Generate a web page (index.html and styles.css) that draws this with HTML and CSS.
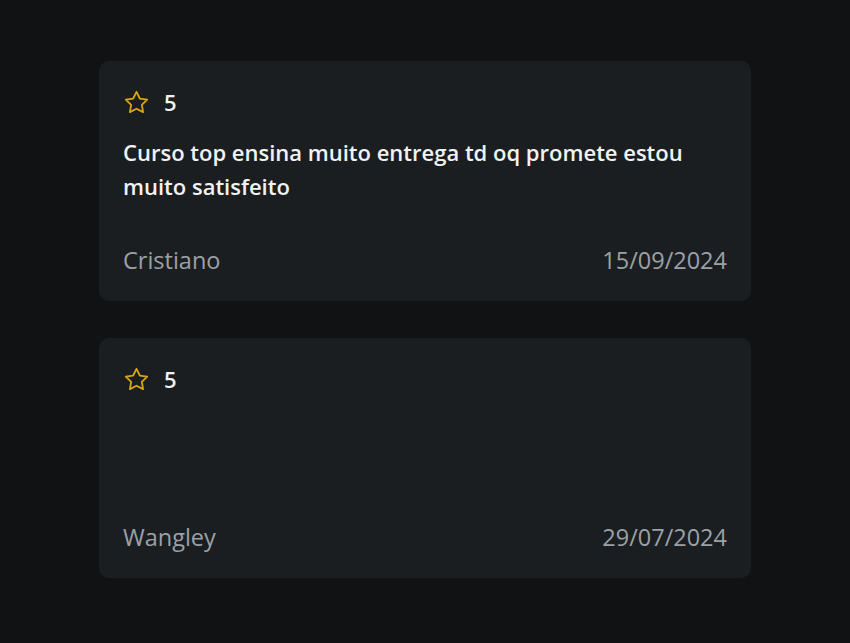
FILE: index.html
```html
<!DOCTYPE html>
<html lang="pt-BR">
<head>
    <meta charset="UTF-8">
    <meta name="viewport" content="width=device-width, initial-scale=1.0">
    <title>Avaliações</title>
    <link rel="stylesheet" href="styles.css">
</head>
<body>
    <div class="reviews">
        <div class="review-card">
            <div class="rating">
                <svg class="star" viewBox="0 0 24 24" fill="none" stroke="currentColor" stroke-width="1.6" stroke-linejoin="round"><path d="M12 2.5l2.94 5.96 6.56.95-4.75 4.63 1.12 6.54L12 17.5l-5.87 3.08 1.12-6.54L2.5 9.41l6.56-.95z"/></svg>
                <span>5</span>
            </div>
            <p class="comment">Curso top ensina muito entrega td oq promete estou muito satisfeito</p>
            <div class="review-footer">
                <span>Cristiano</span>
                <span>15/09/2024</span>
            </div>
        </div>
        <div class="review-card">
            <div class="rating">
                <svg class="star" viewBox="0 0 24 24" fill="none" stroke="currentColor" stroke-width="1.6" stroke-linejoin="round"><path d="M12 2.5l2.94 5.96 6.56.95-4.75 4.63 1.12 6.54L12 17.5l-5.87 3.08 1.12-6.54L2.5 9.41l6.56-.95z"/></svg>
                <span>5</span>
            </div>
            <p class="comment"></p>
            <div class="review-footer">
                <span>Wangley</span>
                <span>29/07/2024</span>
            </div>
        </div>
    </div>
</body>
</html>
```

FILE: styles.css
```css
body {
    margin: 0;
    background-color: #111214;
    font-family: "Open Sans", sans-serif;
    color: #f1f2f3;
}
.reviews {
    width: 652px;
    margin: 0 auto;
    padding-top: 61px;
    display: flex;
    flex-direction: column;
    gap: 37px;
}
.review-card {
    background-color: #1b1e21;
    border-radius: 10px;
    padding: 24px;
    min-height: 240px;
    box-sizing: border-box;
    display: flex;
    flex-direction: column;
}
.rating {
    display: flex;
    align-items: center;
    gap: 14px;
    height: 34px;
    font-size: 22px;
    font-weight: 600;
}
.star {
    width: 27px;
    height: 27px;
    color: #d9a514;
}
.comment {
    margin: 16px 0 0;
    font-size: 22px;
    font-weight: 600;
    line-height: 34px;
}
.review-footer {
    margin-top: auto;
    display: flex;
    justify-content: space-between;
    line-height: 34px;
    font-size: 23.5px;
    color: #9ba1a7;
}
```
